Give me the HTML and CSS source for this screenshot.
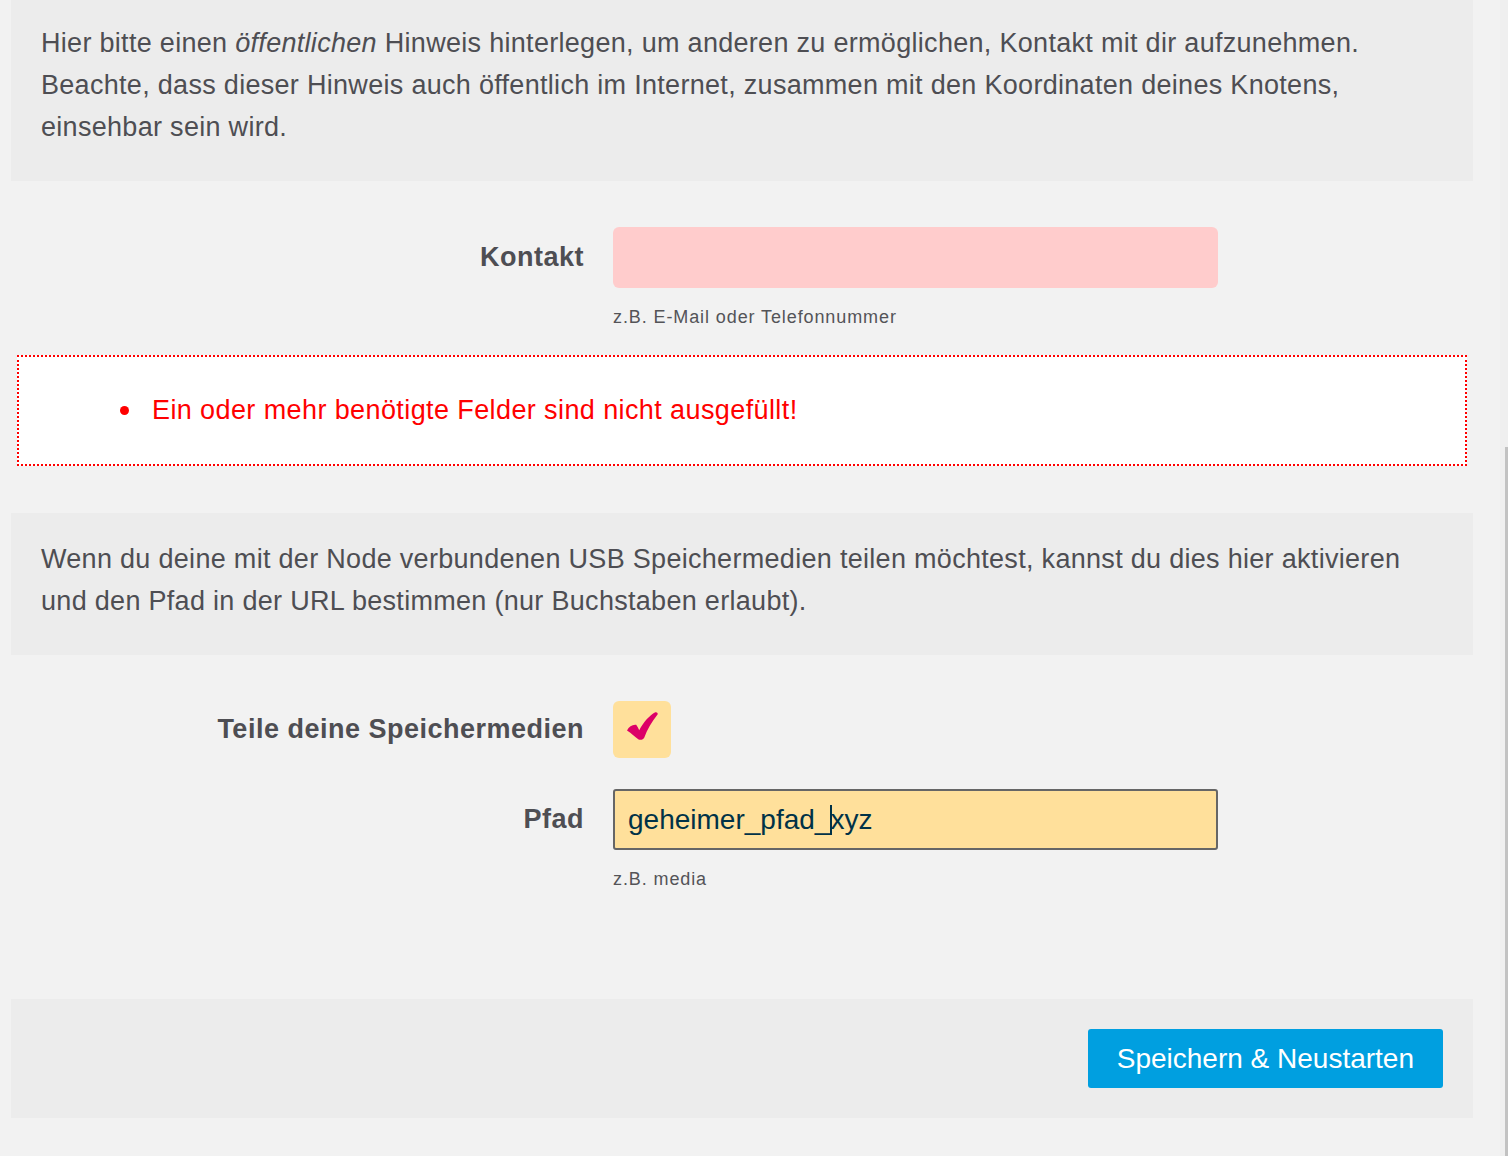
FILE: index.html
```html
<!DOCTYPE html>
<html lang="de">
<head>
<meta charset="utf-8">
<title>Kontakt &amp; Speichermedien</title>
<link rel="stylesheet" href="styles.css">
</head>
<body>
<div class="viewport">
  <main class="content">
    <div class="page">
      <section class="panel panel-first">
        <p class="note">Hier bitte einen <em>öffentlichen</em> Hinweis hinterlegen, um anderen zu ermöglichen, Kontakt mit dir aufzunehmen. Beachte, dass dieser Hinweis auch öffentlich im Internet, zusammen mit den Koordinaten deines Knotens, einsehbar sein wird.</p>
      </section>

      <div class="fields fields-contact">
        <div class="row">
          <label class="label" for="contact">Kontakt</label>
          <div class="input input-error" id="contact"></div>
        </div>
        <div class="hint">z.B. E-Mail oder Telefonnummer</div>
      </div>

      <div class="errors">
        <ul class="error-list">
          <li>Ein oder mehr benötigte Felder sind nicht ausgefüllt!</li>
        </ul>
      </div>

      <section class="panel panel-second">
        <p class="note">Wenn du deine mit der Node verbundenen USB Speichermedien teilen möchtest, kannst du dies hier aktivieren und den Pfad in der URL bestimmen (nur Buchstaben erlaubt).</p>
      </section>

      <div class="fields fields-share">
        <div class="row">
          <span class="label">Teile deine Speichermedien</span>
          <span class="checkbox">
            <svg width="31" height="28" viewBox="0 0 31 28" aria-hidden="true">
              <path d="M0 18.5 C2 14.5 5.5 12.3 9.2 12.8 C10.5 14.6 11.5 16.4 12.2 18.3 C16.5 10 22.5 3.5 28.3 0.3 C30.2 -0.3 31.5 1.6 30.2 3.1 C24.8 9.8 20.3 17.5 17.2 25.8 C16.5 27.6 13.6 28.4 11.6 27.5 C8.2 25 4.6 21.6 0 18.5 Z" fill="#dc0067"/>
            </svg>
          </span>
        </div>
        <div class="row row-path">
          <label class="label" for="path">Pfad</label>
          <div class="input input-focus" id="path">geheimer_pfad_<span class="caret"></span>xyz</div>
        </div>
        <div class="hint">z.B. media</div>
      </div>

      <section class="panel panel-actions">
        <button class="btn" type="button">Speichern &amp; Neustarten</button>
      </section>
    </div>
  </main>
  <div class="scrollbar"><div class="thumb"></div></div>
</div>
</body>
</html>
```

FILE: styles.css
```css
html, body {
  margin: 0;
  padding: 0;
  height: 1156px;
  overflow: hidden;
  background: #f2f2f2;
}

body {
  font-family: "Liberation Sans", Arial, Helvetica, sans-serif;
  color: #4e4e53;
}

.viewport {
  display: flex;
  height: 1156px;
}

.content {
  flex: 1;
  min-width: 0;
}

.page {
  width: 1462px;
  margin-left: 11px;
}

.panel {
  background: #ececec;
  padding: 25px 30px 33px;
}

.panel-first {
  padding-top: 22px;
}

.panel-second {
  margin-top: 47px;
}

.note {
  margin: 0;
  font-size: 27px;
  line-height: 42px;
  letter-spacing: 0.3px;
}

.note em {
  font-style: italic;
}

.fields {
  margin-top: 46px;
}

.row {
  display: grid;
  grid-template-columns: 573px 605px;
  column-gap: 29px;
  align-items: center;
}

.row-path {
  margin-top: 31px;
}

.label {
  text-align: right;
  font-weight: bold;
  font-size: 27px;
  letter-spacing: 0.5px;
  color: #4e4e53;
}

.input {
  box-sizing: border-box;
  height: 61px;
  border-radius: 6px;
}

.input-error {
  background: #ffcccc;
}

.input-focus {
  background: #ffe09b;
  border: 2px solid #666666;
  border-radius: 3px;
  padding: 0 13px;
  display: flex;
  align-items: center;
  font-size: 28px;
  color: #003247;
  white-space: pre;
}

.caret {
  display: inline-block;
  width: 2px;
  height: 30px;
  background: #003247;
  margin-right: -2px;
}

.checkbox {
  width: 58px;
  height: 57px;
  border-radius: 6px;
  background: #ffe09b;
  display: flex;
  align-items: center;
  justify-content: center;
  padding-bottom: 8px;
  box-sizing: border-box;
}

.hint {
  margin: 17px 0 0 602px;
  font-size: 18px;
  line-height: 24px;
  letter-spacing: 0.9px;
  color: #545458;
}

.errors {
  margin: 26px 6px 0;
  background: #ffffff;
  border: 2px dotted #ff0000;
  padding: 32px 0 33px;
}

.error-list {
  margin: 0;
  padding-left: 133px;
  list-style: none;
  color: #ff0000;
  font-size: 27px;
  line-height: 42px;
  letter-spacing: 0.4px;
}

.error-list li::before {
  content: "";
  display: inline-block;
  width: 9px;
  height: 9px;
  border-radius: 50%;
  background: #ff0000;
  margin-left: -32px;
  margin-right: 23px;
  vertical-align: 4px;
}

.panel-actions {
  margin-top: 108px;
  padding: 30px;
  display: flex;
  justify-content: flex-end;
}

.btn {
  background: #009fe0;
  color: #ffffff;
  border: none;
  border-radius: 3px;
  height: 59px;
  padding: 0 29px;
  font-family: "Liberation Sans", Arial, Helvetica, sans-serif;
  font-size: 28px;
  cursor: pointer;
}

.scrollbar {
  width: 8px;
  flex: none;
  background: #efefef;
  display: flex;
  justify-content: flex-end;
}

.thumb {
  width: 3px;
  margin-top: 447px;
  background: #c2c2c2;
}
```
